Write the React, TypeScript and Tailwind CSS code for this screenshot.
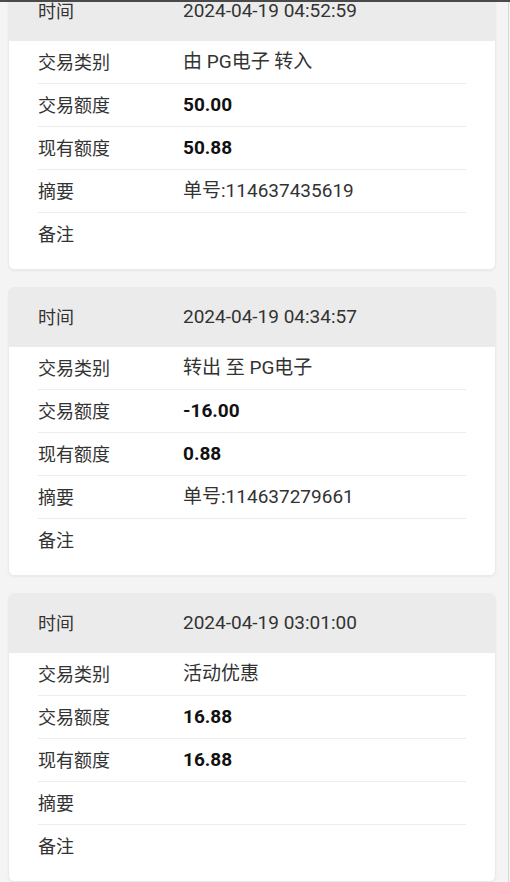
const records = [
  { time: '2024-04-19 04:52:59', type: '由 PG电子 转入', amount: '50.00', balance: '50.88', summary: '单号:114637435619', note: '' },
  { time: '2024-04-19 04:34:57', type: '转出 至 PG电子', amount: '-16.00', balance: '0.88', summary: '单号:114637279661', note: '' },
  { time: '2024-04-19 03:01:00', type: '活动优惠', amount: '16.88', balance: '16.88', summary: '', note: '' },
];

function Row({ label, value, bold, last }: { label: string; value: string; bold?: boolean; last?: boolean }) {
  return (
    <div className={'flex items-center h-[43px] ' + (last ? '' : 'border-b border-[#ececec]')}>
      <div className="w-[145px] shrink-0 text-[#333]">{label}</div>
      <div className={'text-[19px] ' + (bold ? 'font-bold text-[#111]' : 'text-[#333]')}>{value}</div>
    </div>
  );
}

export default function App() {
  return (
    <div
      className="relative min-h-[882px] bg-[#f4f4f4] overflow-hidden text-[18px]"
      style={{ fontFamily: 'Roboto, "Noto Sans CJK SC", sans-serif' }}
    >
      <div className="absolute top-0 left-0 right-0 h-[2px] bg-[#4a4a4a] z-10" />
      <div className="absolute top-0 bottom-0 right-[1px] w-[1px] bg-[#d8d8d8]" />
      <div className="-mt-[19px] pl-[8px] pr-[14px] flex flex-col gap-[17px]">
        {records.map((r) => (
          <div key={r.time} className="bg-white rounded-[6px] border border-[#ebebeb] shadow-[0_1px_2px_rgba(0,0,0,0.05)] overflow-hidden">
            <div className="h-[59px] bg-[#ebebeb] flex items-center pl-[29px] text-[#333]">
              <div className="w-[145px] shrink-0">时间</div>
              <div className="text-[19px]">{r.time}</div>
            </div>
            <div className="mx-[29px] pb-[13px]">
              <Row label="交易类别" value={r.type} />
              <Row label="交易额度" value={r.amount} bold />
              <Row label="现有额度" value={r.balance} bold />
              <Row label="摘要" value={r.summary} />
              <Row label="备注" value={r.note} last />
            </div>
          </div>
        ))}
      </div>
    </div>
  );
}
